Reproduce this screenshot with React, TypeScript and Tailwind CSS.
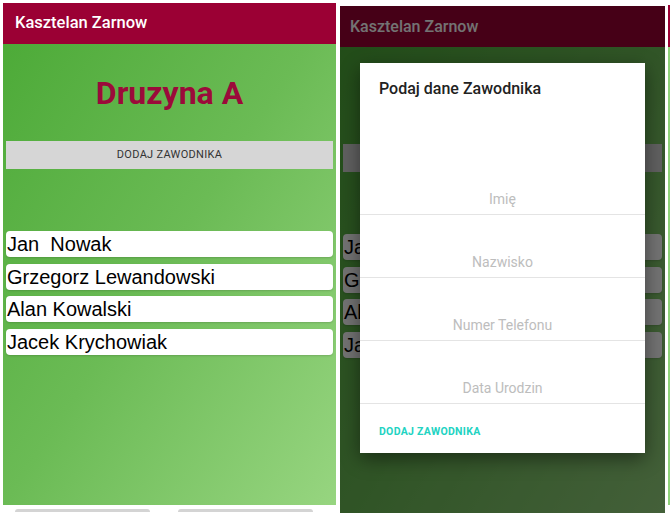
const players = ["Jan\u00a0 Nowak", "Grzegorz Lewandowski", "Alan Kowalski", "Jacek Krychowiak"]

function Screen({ dimmed }: { dimmed?: boolean }) {
  return (
    <div className="relative flex h-full flex-col bg-linear-to-br from-[#4aa935] via-[#6bbb55] to-[#97d580]">
      <div
        className={`flex h-[41px] shrink-0 items-center bg-[#9b0034] text-white [font-family:Roboto,sans-serif] ${dimmed ? "pl-[10px] text-[16px] font-medium" : "pl-[12px] text-[16.5px] font-medium"}`}
      >
        Kasztelan Zarnow
      </div>
      <h1
        className={`mt-[30px] text-center text-[32px] leading-[38px] font-bold text-[#9b0a3a] [font-family:Roboto,sans-serif] ${dimmed ? "invisible" : ""}`}
      >
        Druzyna A
      </h1>
      <div className="mx-[3px] mt-[29px] flex h-[28px] items-center justify-center bg-[#d6d6d6] text-[11px] tracking-[0.3px] text-[#333] [font-family:Roboto,sans-serif]">
        DODAJ ZAWODNIKA
      </div>
      <div className="mx-[3px] mt-[62px] flex flex-col gap-[6.5px]">
        {players.map((p) => (
          <div
            key={p}
            className="flex h-[26px] items-center rounded-[4px] bg-white pl-[1px] text-[20px] text-black shadow-[0_1px_2px_rgba(0,0,0,0.15)] [font-family:'Liberation_Sans',Arial,sans-serif]"
          >
            {p}
          </div>
        ))}
      </div>
      {dimmed && <div className="absolute inset-0 bg-black/55" />}
    </div>
  )
}

function Dialog() {
  const fields = ["Imię", "Nazwisko", "Numer Telefonu", "Data Urodzin"]
  return (
    <div className="absolute top-[57px] right-[20px] left-[20px] flex flex-col bg-white shadow-[0_6px_18px_rgba(0,0,0,0.45)] [font-family:Roboto,sans-serif]">
      <div className="h-[89px] pt-[17px] pl-[19px] text-[16px] leading-[18px] font-medium text-[#222]">
        Podaj dane Zawodnika
      </div>
      {fields.map((f) => (
        <div
          key={f}
          className="flex h-[63px] items-end justify-center border-b border-[#e4e4e4] pb-[6px] text-[14px] leading-[17px] text-[#bdbdbd]"
        >
          {f}
        </div>
      ))}
      <div className="h-[49px] pt-[22px] pl-[19px] text-[10.5px] leading-[12px] font-bold tracking-[0.3px] text-[#22d3c2]">
        DODAJ ZAWODNIKA
      </div>
    </div>
  )
}

export default function App() {
  return (
    <div className="relative flex h-[513px] w-[670px] overflow-hidden bg-white">
      <div className="ml-[3px] flex w-[333px] flex-col pt-[3px]">
        <div className="h-[502px]">
          <Screen />
        </div>
        <div className="flex gap-[28px] px-[12px] pt-[4px]">
          <div className="h-[3px] w-[135px] rounded-t-full bg-[#d4d4d4]" />
          <div className="h-[3px] w-[135px] rounded-t-full bg-[#d4d4d4]" />
        </div>
      </div>
      <div className="relative ml-[4px] mt-[6px] h-[520px] w-[325px]">
        <Screen dimmed />
        <Dialog />
      </div>
      <div className="ml-[3px] mt-[5px] flex h-[500px] w-[2px] flex-col">
        <div className="h-[42px] bg-[#9b0034]" />
        <div className="flex-1 bg-[#8fd27a]" />
      </div>
    </div>
  )
}
